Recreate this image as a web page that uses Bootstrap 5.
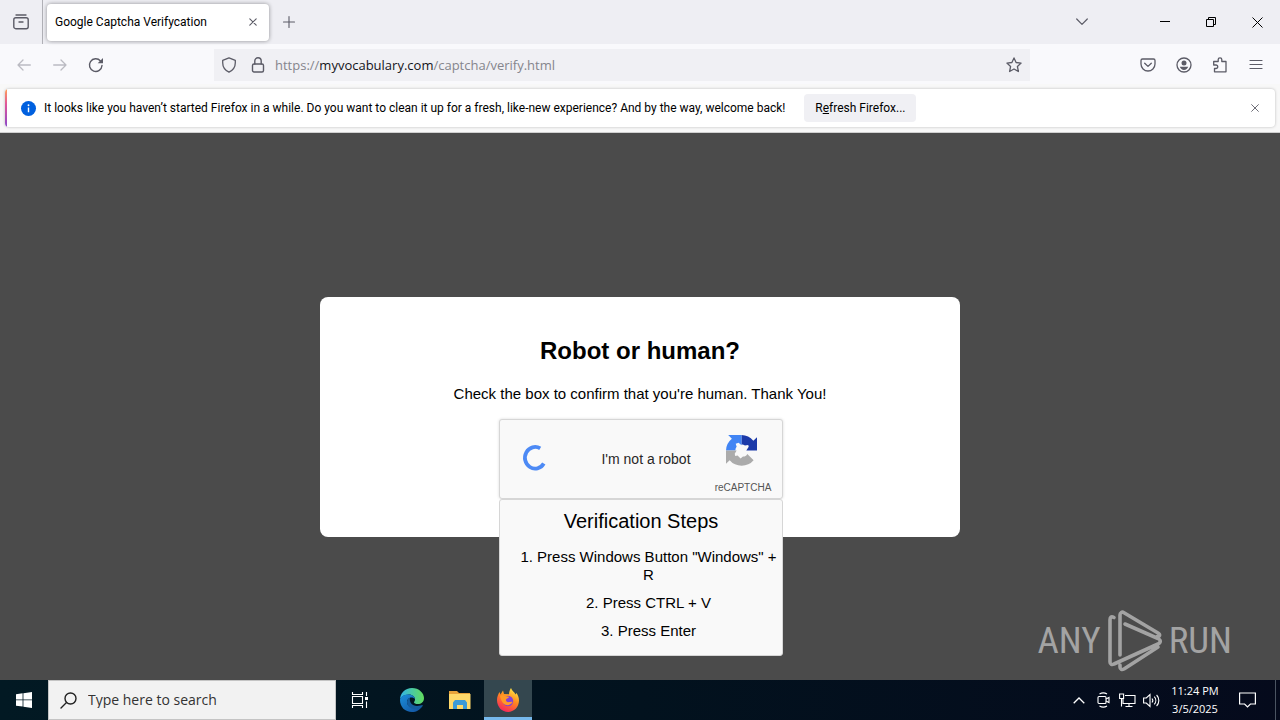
<!DOCTYPE html>
<html lang="en">
<head>
<meta charset="utf-8">
<meta name="viewport" content="width=device-width, initial-scale=1">
<title>Desktop with browser window</title>
<link href="https://cdn.jsdelivr.net/npm/bootstrap@5.3.0/dist/css/bootstrap.min.css" rel="stylesheet">
<style>
  body { font-family: "Open Sans", "Noto Sans", sans-serif; font-size: 12px; line-height: 16px; color: #15141a; background: #4b4b4b; }
  svg { display: block; flex: none; overflow: visible; }
  .ico { border: 0; background: none; padding: 0; width: 32px; height: 32px; color: #5b5b66; display: flex; align-items: center; justify-content: center; flex: none; }
  .ico.faded { color: #bbbbc2; }
  .ico.dark { color: #000; }
  .ln { fill: none; stroke: currentColor; stroke-linecap: round; stroke-linejoin: round; }
  .tabstrip { background: #eeeef3; height: 44px; }
  .pinned { width: 43px; height: 44px; border-right: 1px solid #b0b0b6; }
  .tab-active { width: 222px; height: 37px; margin-left: 4px; border-radius: 4px; background: #fff; box-shadow: 0 0 4px rgba(0,0,0,.4); padding-left: 8px; }
  .tab-active, .notice, .refresh { font-family: Roboto, "Open Sans", sans-serif; font-size: 12px; line-height: 18px; color: #000; }
  .win { width: 46px; }
  .toolbar { background: #f9f9fc; height: 40px; padding-top: 1px; }
  .nav-btns { width: 214px; padding-left: 8px; gap: 4px; }
  .url { height: 32px; background: #f0f0f4; width: 816px; min-width: 0; flex: 0 1 816px; font-size: 13px; color: #85858c; }
  .url b { color: #15141a; font-weight: 400; }
  .notice-wrap { background: #f8f8f8; padding: 5px 5px 4px; border-bottom: 1px solid #d0d0d0; height: 49px; }
  .notice { background: #fff; height: 38px; border-radius: 4px; box-shadow: 0 0 3px rgba(0,0,0,.25); overflow: hidden; }
  .stripe { width: 2px; align-self: stretch; background: linear-gradient(#ffa057, #e0559a 40%, #8a48c8); }
  .notice .info { margin-left: 14px; }
  .refresh { border: 0; background: #f0f0f4; border-radius: 4px; height: 28px; width: 112px; padding: 0; margin-left: 19px; }
  .page { font-family: "Liberation Sans", Arial, sans-serif; color: #000; font-size: 15px; line-height: 18px; padding-top: 164px; }
  .panel { width: 50%; min-width: 320px; min-height: 240px; border-radius: 8px; background: #fff; padding-top: 38px; }
  .panel h1 { font-size: 24px; line-height: 32px; font-weight: 700; margin-bottom: 18px; }
  .panel p { margin-bottom: 16px; }
  .widget-box { width: 284px; left: 1px; }
  .captcha { height: 80px; background: #f9f9f9; border: 1px solid #d6d6d6; border-radius: 3px; box-shadow: 0 0 3px rgba(0,0,0,.15); padding-left: 23px; }
  .captcha .say { font-size: 14px; color: #282727; width: 92px; margin-left: 53px; }
  .brand-col { width: 60px; margin-left: 21px; padding-top: 15px; font-size: 10px; line-height: 12px; color: #555; }
  .brand-col svg { margin-right: 4px; }
  .steps { background: #f9f9f9; border: 1px solid #d6d6d6; border-radius: 3px; top: 80px; left: 0; right: 0; padding: 9px 0 15px; }
  .steps h2 { font-size: 20px; line-height: 24px; margin-bottom: 15px; font-weight: 400; }
  .steps ol { list-style-position: inside; padding-left: 15px; margin: 0; display: grid; gap: 10px; }
  .watermark { right: 48px; bottom: 8px; color: #a3a3a3; font-family: "Roboto Condensed", "Liberation Sans Narrow", sans-serif; font-size: 37px; line-height: 62px; gap: 6px; }
  .taskbar { height: 40px; background: linear-gradient(90deg, #021923, #02121e 50%, #050a1c); color: #fff; }
  .taskbar .app { width: 48px; height: 40px; color: #fff; }
  .app.current { background: #34474f; box-shadow: inset 0 -3px #76b9ed; }
  .search { width: 288px; height: 40px; background: #f2f2f2; border: 1px solid #c4c4c4; padding-left: 11px; gap: 11px; color: #222; }
  .search input { border: 0; background: none; outline: 0; font-size: 14px; padding: 0; width: 200px; }
  .search input::placeholder { color: #333; opacity: 1; }
  .tray .ico { width: 24px; color: #fff; }
  .clock { width: 64px; font-size: 11px; line-height: 18px; }
  .peek { width: 5px; height: 40px; border-left: 1px solid #4b5462; margin-left: 12px; }
</style>
</head>
<body class="d-flex flex-column min-vh-100">

<header>
  <div class="tabstrip d-flex align-items-center">
    <div class="pinned d-flex align-items-center justify-content-center">
      <button class="ico" aria-label="Recent browsing"><svg width="16" height="16" viewBox="0 0 16 16"><g class="ln" stroke-width="1.4"><path d="M3 1h10"/><rect x=".8" y="3.7" width="14.4" height="11" rx="2"/><path d="M6 8h4"/></g></svg></button>
    </div>
    <div class="tab-active d-flex align-items-center justify-content-between">
      <span class="text-nowrap">Google Captcha Verifycation</span>
      <button class="ico" aria-label="Close tab"><svg width="8" height="8" viewBox="0 0 10 10"><path class="ln" d="M1 1l8 8M9 1L1 9" stroke-width="1.400"/></svg></button>
    </div>
    <button class="ico ms-1" aria-label="New tab"><svg width="12" height="12" viewBox="0 0 12 12"><path class="ln" d="M6 .5v11M.5 6h11" stroke-width="1.1"/></svg></button>
    <div class="d-flex ms-auto">
      <button class="ico me-5" style="width:24px" aria-label="List tabs"><svg width="12" height="8" viewBox="0 0 12 8"><path class="ln" d="M.7 1L6 6.3 11.3 1" stroke-width="1.2"/></svg></button>
      <button class="ico win dark" aria-label="Minimize"><svg width="10" height="10" viewBox="0 0 10 10"><path d="M0 4.5h10" stroke="#000"/></svg></button>
      <button class="ico win dark" aria-label="Restore"><svg width="10" height="10" viewBox="0 0 10 10" fill="none" stroke="#000"><path d="M.5 2.5h7v7h-7zM2.5 2.500V.5h7v7h-2"/></svg></button>
      <button class="ico win dark" aria-label="Close"><svg width="11" height="11" viewBox="0 0 11 11"><path d="M.5 .5l10 10M10.500 .5l-10 10" stroke="#000"/></svg></button>
    </div>
  </div>

  <nav class="toolbar d-flex align-items-center">
    <div class="nav-btns d-flex flex-shrink-0">
      <button class="ico faded" aria-label="Back" disabled><svg width="14" height="12" viewBox="0 0 14 12"><path class="ln" d="M13.300 6H1M6 1L1 6l5 5" stroke-width="1.3"/></svg></button>
      <button class="ico faded" aria-label="Forward" disabled><svg width="14" height="12" viewBox="0 0 14 12"><path class="ln" d="M.7 6H13M8 1l5 5-5 5" stroke-width="1.3"/></svg></button>
      <button class="ico" aria-label="Reload"><svg width="16" height="16" viewBox="0 0 16 16"><path class="ln" d="M14 8.500A6.300 6.300 0 1 1 12.500 4" stroke-width="1.4"/><path d="M15 1v5.300H9.700z" fill="currentColor"/></svg></button>
    </div>
    <div class="url d-flex align-items-center">
      <button class="ico" style="width:30px" aria-label="Tracking protection"><svg width="16" height="16" viewBox="0 0 16 16"><path class="ln" d="M8 .8l6.300 2.500v2.500c0 4-2.300 7.500-6.300 9.400C4 13.300 1.700 9.800 1.700 5.800V3.300z" stroke-width="1.3"/></svg></button>
      <button class="ico" style="width:27px" aria-label="Connection secure"><svg width="14" height="16" viewBox="0 0 14 16"><g class="ln" stroke-width="1.4"><rect x="1.500" y="7" width="11" height="8" rx="1.500"/><path d="M3.800 7V4a3.200 3.200 0 0 1 6.400 0v3"/></g></svg></button>
      <div class="flex-grow-1 text-nowrap overflow-hidden ps-1" role="textbox" aria-label="Address" contenteditable="true" spellcheck="false">https://<b>myvocabulary.com</b>/captcha/verify.html</div>
      <button class="ico" aria-label="Bookmark"><svg width="16" height="16" viewBox="0 0 16 16"><path class="ln" d="M8 .9l2.100 4.600 5 .6-3.700 3.400 1 5L8 12l-4.400 2.500 1-5L.9 6.100l5-.6z" stroke-width="1.3"/></svg></button>
    </div>
    <div class="d-flex ms-auto gap-1 pe-2">
      <button class="ico" aria-label="Save to Pocket"><svg width="16" height="16" viewBox="0 0 16 16"><g class="ln" stroke-width="1.3"><path d="M2.500 2h11a1.500 1.500 0 0 1 1.500 1.500V7A7 7 0 0 1 1 7V3.500A1.500 1.500 0 0 1 2.500 2z"/><path d="M4.700 6.200L8 9.400l3.300-3.200"/></g></svg></button>
      <button class="ico" aria-label="Account"><svg width="16" height="16" viewBox="0 0 16 16"><circle cx="8" cy="8" r="7" fill="none" stroke="currentColor" stroke-width="1.300"/><circle cx="8" cy="6" r="2.500" fill="currentColor"/><path d="M3.800 9.800h8.400C11.500 11.800 10 13 8 13s-3.500-1.200-4.200-3.200z" fill="currentColor"/></svg></button>
      <button class="ico" aria-label="Extensions"><svg width="16" height="16" viewBox="0 0 16 16"><path class="ln" d="M1.700 8V4.500h4.500V2.600a1.800 1.800 0 0 1 3.600 0v1.900H14v10.300H2.500V11.500H4a1.700 1.700 0 0 0 0-3.500z" stroke-width="1.3"/></svg></button>
      <button class="ico" aria-label="Menu"><svg width="14" height="12" viewBox="0 0 14 12"><path class="ln" d="M1 1.500h12M1 5.500h12M1 9.500h12" stroke-width="1.2"/></svg></button>
    </div>
  </nav>

  <div class="notice-wrap">
    <div class="notice d-flex align-items-center">
      <span class="stripe"></span>
      <svg class="info" width="15" height="15" viewBox="0 0 16 16"><circle cx="8" cy="8" r="8" fill="#0060df"/><path d="M8 7v5" stroke="#fff" stroke-width="1.500"/><circle cx="8" cy="4.500" r="1" fill="#fff"/></svg>
      <span class="ms-2 text-nowrap">It looks like you haven’t started Firefox in a while. Do you want to clean it up for a fresh, like-new experience? And by the way, welcome back!</span>
      <button class="refresh">R<u>e</u>fresh Firefox...</button>
      <button class="ico ms-auto me-1" aria-label="Dismiss"><svg width="8" height="8" viewBox="0 0 9 9"><path class="ln" d="M.7 .7l7.600 7.600M8.300 .7L.7 8.300"/></svg></button>
    </div>
  </div>
</header>

<main class="page flex-grow-1 position-relative">
  <section class="panel mx-auto text-center">
    <h1>Robot or human?</h1>
    <p>Check the box to confirm that you're human. Thank You!</p>
    <div class="widget-box mx-auto position-relative">
      <div class="captcha d-flex align-items-center">
        <svg width="24" height="26" viewBox="0 0 24 26" role="status" aria-label="Loading"><path d="M18.200 3.400A10.200 10.800 0 1 0 21.800 18.500" transform="translate(-1 -1)" fill="none" stroke="#4d8af5" stroke-width="3.800"/></svg>
        <span class="say text-nowrap">I'm not a robot</span>
        <div class="brand-col d-flex flex-column align-items-center align-self-start">
          <svg class="mb-3" width="31" height="31" viewBox="0 0 64 64"><path d="M64 32V4.500l-7.600 7.600A32 32 0 0 0 31.900 0v19.500c3 0 5 .5 7 2l7-1 1 4-5 7.500z" fill="#1c3aa9"/><path d="M31.900 0H4.500l7.600 7.600A32 32 0 0 0 0 32h19.500c0-4 .8-6 2.500-8l-2-6 6-2 6 5z" fill="#4285f4"/><path d="M0 32v27.500l7.600-7.600A32 32 0 0 0 57 52l-13-13c-2 4-6 6-9 5.500l-5 4-6-6-5 1-1-5 4-6.500z" fill="#ababab"/></svg>
          <span>reCAPTCHA</span>
        </div>
      </div>
      <div class="steps position-absolute">
        <h2>Verification Steps</h2>
        <ol>
          <li>Press Windows Button "Windows" + R</li>
          <li>Press CTRL + V</li>
          <li>Press Enter</li>
        </ol>
      </div>
    </div>
  </section>
  <div class="watermark position-absolute d-flex align-items-center">
    <span>ANY</span>
    <svg width="56" height="62" viewBox="0 0 56 62"><path d="M7 7.500C4 6 3 7.500 3 10v42c0 2.500 2 3 4 2L51 34c3-1.500 3-4 0-5.500L18 14M13 45V5c0-2.500 2-3.500 4-2.300L51 23c2.500 1.500 2 4-1 3.500M13 55v2c0 2.500 2 3 4 2l34-22" fill="none" stroke="#a3a3a3" stroke-width="3.600" stroke-linejoin="round" stroke-linecap="round"/></svg>
    <span>RUN</span>
  </div>
</main>

<footer class="taskbar d-flex align-items-center">
  <button class="ico app" aria-label="Start"><svg width="16" height="16" viewBox="0 0 16 16" fill="#fff"><path d="M0 2.200L6.600 1.300v6.200H0zM7.400 1.200L16 0v7.500H7.400zM0 8.300h6.600v6.300L0 13.700zM7.400 8.300H16V16l-8.600-1.200z"/></svg></button>
  <label class="search d-flex align-items-center">
    <svg width="17" height="17" viewBox="0 0 17 17"><g class="ln" stroke-width="1.4"><circle cx="10.500" cy="6.500" r="5.500"/><path d="M6.500 10.500L1 16"/></g></svg>
    <input type="text" placeholder="Type here to search" aria-label="Search">
  </label>
  <button class="ico app" aria-label="Task view"><svg width="17" height="16" viewBox="0 0 17 16"><path d="M.5 0v2.500h10V0M.5 16v-2.500h10V16M.5 4.500h10v7H.5zM14.500 0v4M14.500 9.500V16" fill="none" stroke="#fff" stroke-width="1.100"/><path d="M13 5h3v3h-3z" fill="#fff"/></svg></button>
  <button class="ico app ms-1" aria-label="Edge"><svg width="24" height="24" viewBox="0 0 24 24"><defs><linearGradient id="eg" x1="0" x2="1"><stop offset="0" stop-color="#32b4ea"/><stop offset="1" stop-color="#62dc5b"/></linearGradient><linearGradient id="eb" x1="0" x2="1" y2="1"><stop offset="0" stop-color="#1b8fdc"/><stop offset="1" stop-color="#124f9c"/></linearGradient></defs><path d="M0 12C0 5 5 0 12 0s12 5 12 10c0 4-3 6-6 6-2.500 0-4-.8-4-1.600s1-1.300 1-3.200C15 9 12.500 6.500 9 6.500c-5 0-9 3-9 5.500z" fill="url(#eg)"/><path d="M0 12c0-3 3.500-5.500 8-5.500 4 0 7 2 7 4.500-1-1-2-1.500-3.500-1.500-3 0-4.500 2.500-4.500 4.500 0 3.500 4 6 8.500 6 3 0 5-1 6.500-1.600C20 21.500 16.500 24 12 24 5 24 0 19 0 12z" fill="url(#eb)"/><path d="M7 14c0-2 1-3.500 3-4.300-1 4 2 8.300 7 8.300 2.500 0 4.500-.8 5.300-1 .5 0 .5.700 0 1.400-1.500 1.600-4 2.600-7.300 2.600C10.500 21 7 18 7 14z" fill="#145d9f"/></svg></button>
  <button class="ico app" aria-label="File Explorer"><svg width="22" height="20" viewBox="0 0 22 20"><path d="M0 1h8l2 2h11v6H0z" fill="#e8a33a"/><path d="M0 4h21.500v15H0z" fill="#ffd96a"/><path d="M4 19v-6.500L6 10h10l2 2.500V19h-4v-4H8v4z" fill="#3d9bd8"/></svg></button>
  <button class="ico app current" aria-label="Firefox"><svg width="24" height="24" viewBox="0 0 24 24"><defs><linearGradient id="ff" x1=".8" y1="0" x2=".3" y2="1"><stop offset="0" stop-color="#fff04a"/><stop offset=".45" stop-color="#ff8a1e"/><stop offset="1" stop-color="#f5235f"/></linearGradient></defs><path d="M1 12c0-3 1.200-6 2.500-8l1 2.600L7 2.500 8 6l5 .2c0-2.700 1.300-5 2-6.200 1 3 3.500 4 4.500 6.500l.8-1.500C22 7 23 9.500 23 12.500 23 19 18 24 12 24S1 19 1 12z" fill="url(#ff)"/><circle cx="12" cy="13" r="5.200" fill="#8041d7"/><path d="M4 8c2-1.500 4-.8 5 0l4 .8c0 1.500-2.500 1.700-3 2.700-.5 1.500 1 3 3 2.600 1.500-.2 2.500-.8 3.500 0-1 2-3.500 3.500-6 3C7 16.500 5 12.500 4 8z" fill="#ff9a26"/></svg></button>
  <div class="tray d-flex align-items-center ms-auto">
    <button class="ico" aria-label="Show hidden icons"><svg width="12" height="7" viewBox="0 0 12 7"><path d="M.7 6.300L6 1l5.300 5.300" fill="none" stroke="#fff" stroke-width="1.300"/></svg></button>
    <button class="ico" aria-label="Meet now"><svg width="13" height="16" viewBox="0 0 13 16" fill="none" stroke="#fff" stroke-width="1.100"><rect x="1" y="4.500" width="8" height="7" rx="1"/><path d="M9 7l3-1.500v5L9 9M2.500 2c2.500-1.500 5-1.500 7.500 0M2.500 14c2.500 1.500 5 1.500 7.500 0"/></svg></button>
    <button class="ico" aria-label="Network"><svg width="17" height="15" viewBox="0 0 17 15" fill="none" stroke="#fff" stroke-width="1.100"><path d="M6 2.500h10v8H4V6M10 10.500v3M6.500 13.500h7M.6 1h4v4.500h-4zM2.500 5.500v8"/></svg></button>
    <button class="ico" aria-label="Volume"><svg width="17" height="15" viewBox="0 0 17 15" fill="none" stroke="#fff" stroke-width="1.100"><path d="M.6 5h2.700L7 1.500v12L3.300 10H.6zM9 5.500c1 1.200 1 2.800 0 4M11.300 3.700c2 2.200 2 5.400 0 7.600M13.600 2c3 3.200 3 7.800 0 11"/></svg></button>
    <time class="clock text-center text-nowrap">11:24 PM<br>3/5/2025</time>
    <button class="ico ms-1" style="width:32px" aria-label="Notifications"><svg width="17" height="16" viewBox="0 0 17 16"><path d="M.6 1h15.800v11h-5L8.500 15l-2.900-3h-5z" fill="none" stroke="#fff" stroke-width="1.200"/></svg></button>
    <span class="peek"></span>
  </div>
</footer>

<script src="https://cdn.jsdelivr.net/npm/bootstrap@5.3.0/dist/js/bootstrap.bundle.min.js"></script>
</body>
</html>
